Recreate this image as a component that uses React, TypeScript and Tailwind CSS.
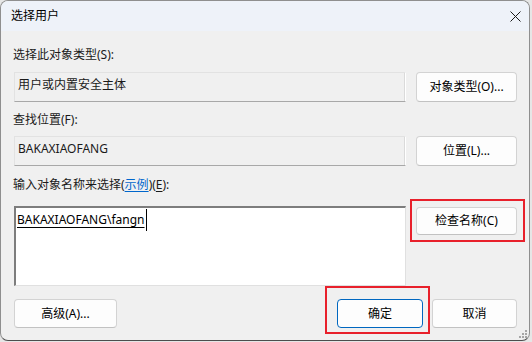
import React from 'react';

const font = { fontFamily: '"Noto Sans", "Noto Sans CJK SC", sans-serif' };

function Field({ text }: { text: string }) {
  return (
    <div className="w-[392px] h-[30px] bg-[#f0f0f0] border-t border-l border-[#e2e2e2] border-b border-r border-b-[#a8a8a8] border-r-[#ffffff] shadow-[inset_-1px_0_0_#dadada] flex items-start pt-[3px] pl-[3px] text-[12px] text-[#1a1a1a]">
      {text}
    </div>
  );
}

function Btn({ children, w, primary }: { children: React.ReactNode; w: string; primary?: boolean }) {
  return (
    <button
      className={`${w} h-full rounded-[4px] bg-[#fdfdfd] text-[12px] text-black flex items-center justify-center ${
        primary ? 'border border-[#0067c0]' : 'border border-[#d3d3d3] border-b-[#c2c2c2]'
      }`}
    >
      {children}
    </button>
  );
}

export default function App() {
  return (
    <div className="w-[532px] h-[342px] bg-[#e6e6e6]" style={font}>
      <div className="w-[530px] h-[341px] rounded-[8px] border border-[#8f8f8f] border-b-[#4d4d4d] bg-[#f0f0f0] overflow-hidden flex flex-col relative">
        {/* title bar */}
        <div className="h-[30px] bg-[#eef2f9] flex items-center justify-between pl-[10px] pr-[7px]">
          <span className="text-[12px] text-black">选择用户</span>
          <svg width="11" height="11" viewBox="0 0 11 11" className="mr-[1px]">
            <path d="M0.5 0.5L10.5 10.5M10.5 0.5L0.5 10.5" stroke="#1a1a1a" strokeWidth="1" />
          </svg>
        </div>

        <div className="flex flex-col pl-[13px] pr-[12px] pt-[16px] text-[12px] text-[#1a1a1a]">
          <div className="h-[16px] leading-[16px] -ml-[1px]">选择此对象类型(S):</div>
          <div className="flex gap-[10px] h-[30px] mt-[9px]">
            <Field text="用户或内置安全主体" />
            <Btn w="w-[101px]">对象类型(O)...</Btn>
          </div>

          <div className="h-[16px] leading-[16px] mt-[10px] -ml-[1px]">查找位置(F):</div>
          <div className="flex gap-[10px] h-[30px] mt-[8px]">
            <Field text="BAKAXIAOFANG" />
            <Btn w="w-[101px]">位置(L)...</Btn>
          </div>

          <div className="h-[16px] leading-[16px] mt-[11px] -ml-[1px]">
            输入对象名称来选择(<span className="text-[#0066cc] underline underline-offset-2">示例</span>)(<span className="underline underline-offset-2">E</span>):
          </div>
          <div className="flex gap-[10px] mt-[13px]">
            <div className="w-[392px] h-[80px] bg-white border-t-2 border-l-2 border-[#7d7d7d] border-b border-r border-b-[#e0e0e0] border-r-[#e0e0e0] pl-[1px] pt-[1px]">
              <div className="flex items-center h-[22px]">
                <span className="underline underline-offset-[3px] text-[12px] text-black">BAKAXIAOFANG\fangn</span>
                <span className="w-[1px] h-[22px] bg-black ml-[1px]" />
              </div>
            </div>
            <div className="relative h-[28px] mt-[1px]">
              <Btn w="w-[101px]">检查名称(C)</Btn>
              <div className="absolute -left-[6px] -right-[8px] -top-[8px] -bottom-[7px] border-2 border-[#e8202b]" />
            </div>
          </div>

          <div className="flex h-[29px] mt-[13px]">
            <Btn w="w-[103px]">高级(A)...</Btn>
            <div className="relative h-[29px] ml-[220px]">
              <Btn w="w-[86px]" primary>确定</Btn>
              <div className="absolute -left-[12px] -right-[7px] -top-[13px] -bottom-[6px] border-2 border-[#e8202b]" />
            </div>
            <div className="h-[29px] ml-[9px]">
              <Btn w="w-[85px]">取消</Btn>
            </div>
          </div>
        </div>

        <svg width="10" height="10" viewBox="0 0 10 10" className="absolute right-[1px] bottom-[1px]">
          <rect x="7" y="1" width="2" height="2" fill="#a6a6a6" />
          <rect x="4" y="4" width="2" height="2" fill="#a6a6a6" />
          <rect x="7" y="4" width="2" height="2" fill="#a6a6a6" />
          <rect x="1" y="7" width="2" height="2" fill="#a6a6a6" />
          <rect x="4" y="7" width="2" height="2" fill="#a6a6a6" />
          <rect x="7" y="7" width="2" height="2" fill="#a6a6a6" />
        </svg>
      </div>
    </div>
  );
}
